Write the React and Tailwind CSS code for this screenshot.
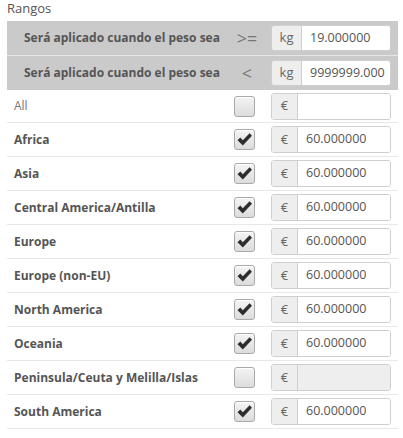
import React from "react";

const regions = [
  { name: "Africa", checked: true },
  { name: "Asia", checked: true },
  { name: "Central America/Antilla", checked: true },
  { name: "Europe", checked: true },
  { name: "Europe (non-EU)", checked: true },
  { name: "North America", checked: true },
  { name: "Oceania", checked: true },
  { name: "Peninsula/Ceuta y Melilla/Islas", checked: false, disabled: true },
  { name: "South America", checked: true },
];

function Check({ checked }) {
  return (
    <div className="w-[21px] h-[21px] rounded-[3px] border border-[#a9a9a9] bg-gradient-to-b from-[#f4f4f4] to-[#dcdcdc] flex items-center justify-center shadow-[inset_0_1px_0_#fff]">
      {checked && (
        <svg width="17" height="15" viewBox="0 0 17 15">
          <path d="M1.5 8.2 L4.3 5.6 L6.8 8.3 L13.6 1.2 L16 3.7 L6.8 13.6 Z" fill="#2e2e2e" />
        </svg>
      )}
    </div>
  );
}

function InputGroup({ addon, value, disabled, addonW = "w-[26px]", h = "h-[27px]" }) {
  return (
    <div className={`flex ${h} w-[120px] rounded-[3px] border border-[#cfcfcf] overflow-hidden`}>
      <div className={`${addonW} shrink-0 bg-[#eeeeee] border-r border-[#cfcfcf] flex items-center justify-center text-[13px] text-[#666]`}>
        {addon}
      </div>
      <div className={`flex-1 flex items-center pl-[8px] text-[12.5px] text-[#555] whitespace-nowrap ${disabled ? "bg-[#eeeeee]" : "bg-white"}`}>
        {value}
      </div>
    </div>
  );
}

export default function App() {
  return (
    <div className="w-[403px] h-[438px] bg-white overflow-hidden font-['Open_Sans',sans-serif]">
      <div className="pl-[7px] pt-[1px] text-[13px] leading-[14px] text-[#555] h-[21px]">Rangos</div>
      <div className="mx-[7px] w-[391px]">
        <div className="bg-[#cacaca] h-[34px] flex items-center">
          <div className="pl-[17px] w-[216px] text-[12px] font-bold text-[#555] whitespace-nowrap">Será aplicado cuando el peso sea</div>
          <div className="w-[48px] text-[18px] text-[#777] text-center leading-none">&gt;=</div>
          <InputGroup addon="kg" value="19.000000" addonW="w-[30px]" h="h-[26px]" />
        </div>
        <div className="h-px bg-[#e6e6e6]" />
        <div className="bg-[#cacaca] h-[34px] flex items-center">
          <div className="pl-[17px] w-[216px] text-[12px] font-bold text-[#555] whitespace-nowrap">Será aplicado cuando el peso sea</div>
          <div className="w-[48px] text-[18px] text-[#777] text-center leading-none">&lt;</div>
          <InputGroup addon="kg" value="9999999.000" addonW="w-[30px]" h="h-[26px]" />
        </div>
        <div className="h-[33px] flex items-center border-b border-[#e8e8e8]">
          <div className="pl-[7px] w-[227px] text-[12px] text-[#777]">All</div>
          <div className="w-[37px]"><Check checked={false} /></div>
          <InputGroup addon="€" value="" />
        </div>
        {regions.map((r) => (
          <div key={r.name} className="h-[34px] flex items-center border-b border-[#e8e8e8]">
            <div className="pl-[7px] w-[227px] text-[12px] font-bold text-[#555] whitespace-nowrap">{r.name}</div>
            <div className="w-[37px]"><Check checked={r.checked} /></div>
            <InputGroup addon="€" value={r.checked ? "60.000000" : ""} disabled={r.disabled} />
          </div>
        ))}
      </div>
    </div>
  );
}
